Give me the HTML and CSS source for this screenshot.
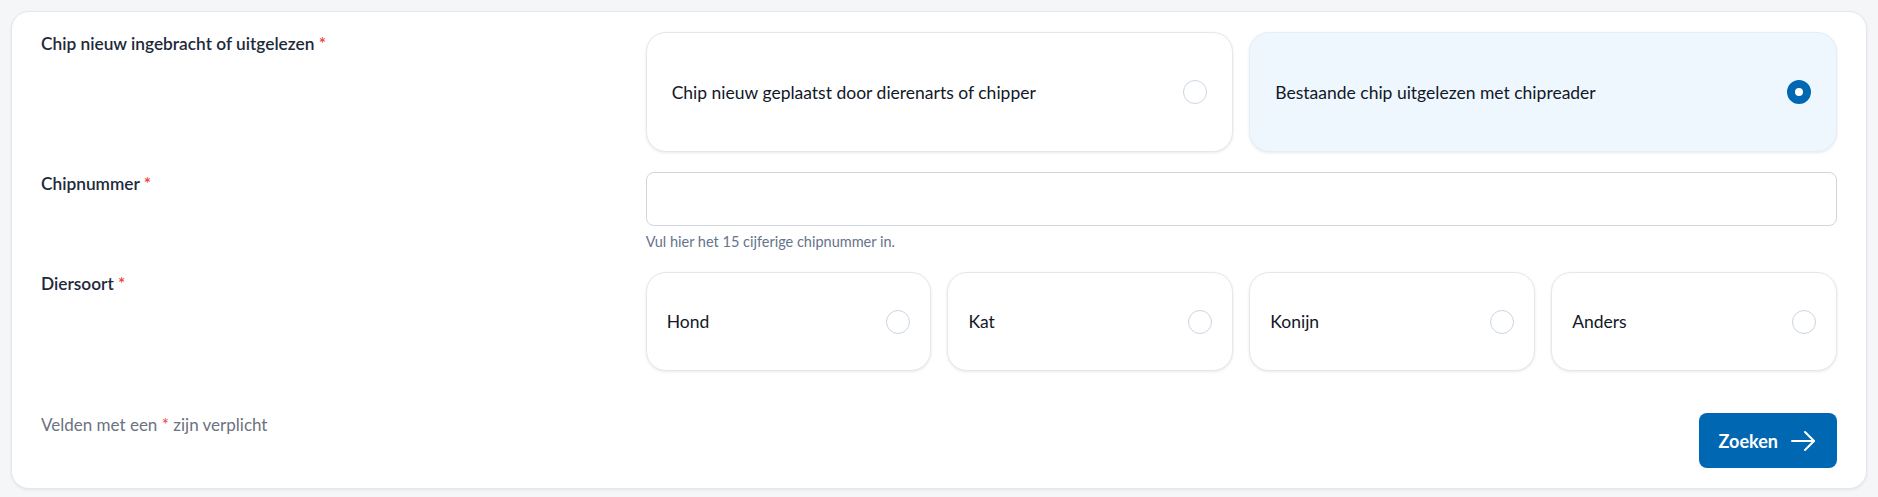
FILE: index.html
```html
<!DOCTYPE html>
<html lang="nl">
<head>
    <meta charset="UTF-8">
    <meta name="viewport" content="width=device-width, initial-scale=1.0">
    <title>Chip zoeken</title>
    <link rel="stylesheet" href="styles.css">
</head>
<body>
    <form class="panel" onsubmit="return false">
        <div class="field">
            <div class="field-label">Chip nieuw ingebracht of uitgelezen <span class="req">*</span></div>
            <div class="options options-2">
                <label class="option big">
                    <span>Chip nieuw geplaatst door dierenarts of chipper</span>
                    <input type="radio" name="chip" value="nieuw">
                </label>
                <label class="option big checked">
                    <span>Bestaande chip uitgelezen met chipreader</span>
                    <input type="radio" name="chip" value="bestaand" checked>
                </label>
            </div>
        </div>

        <div class="field">
            <div class="field-label">Chipnummer <span class="req">*</span></div>
            <div>
                <input class="text-input" type="text" name="chipnummer">
                <div class="help">Vul hier het 15 cijferige chipnummer in.</div>
            </div>
        </div>

        <div class="field">
            <div class="field-label">Diersoort <span class="req">*</span></div>
            <div class="options options-4">
                <label class="option">
                    <span>Hond</span>
                    <input type="radio" name="dier" value="hond">
                </label>
                <label class="option">
                    <span>Kat</span>
                    <input type="radio" name="dier" value="kat">
                </label>
                <label class="option">
                    <span>Konijn</span>
                    <input type="radio" name="dier" value="konijn">
                </label>
                <label class="option">
                    <span>Anders</span>
                    <input type="radio" name="dier" value="anders">
                </label>
            </div>
        </div>

        <div class="footer">
            <div class="note">Velden met een <span class="req">*</span> zijn verplicht</div>
            <button class="btn" type="submit">
                Zoeken
                <svg width="26" height="22" viewBox="0 0 26 22" fill="none" stroke="currentColor" stroke-width="2" stroke-linecap="round" stroke-linejoin="round">
                    <path d="M2 11h22"/>
                    <path d="M15 2l9 9-9 9"/>
                </svg>
            </button>
        </div>
    </form>

    <script>
        document.querySelectorAll('.option input').forEach(function (input) {
            input.addEventListener('change', function () {
                document.querySelectorAll('input[name="' + input.name + '"]').forEach(function (other) {
                    other.closest('.option').classList.toggle('checked', other.checked);
                });
            });
        });
    </script>
</body>
</html>
```

FILE: styles.css
```css
body {
    margin: 0;
    padding: 11px 11px 10px;
    background-color: #f5f6f8;
    font-family: 'Lato', 'Noto Sans', sans-serif;
    color: #111827;
}
.panel {
    background-color: #fff;
    border: 1px solid #e5e7eb;
    border-radius: 18px;
    box-shadow: 0 1px 3px rgba(0, 0, 0, 0.08);
    padding: 20px 29px;
}
.field {
    display: grid;
    grid-template-columns: 1fr 2fr;
    column-gap: 9px;
    margin-bottom: 20px;
}
.field-label {
    font-size: 17.3px;
    font-weight: 600;
    line-height: 24px;
    color: #1e293b;
}
.req {
    color: #ef4444;
}
.options {
    display: grid;
    gap: 16px;
}
.options-2 {
    grid-template-columns: 1fr 1fr;
}
.options-4 {
    grid-template-columns: repeat(4, 1fr);
}
.option {
    display: flex;
    align-items: center;
    justify-content: space-between;
    height: 99px;
    box-sizing: border-box;
    padding: 0 20px;
    border: 1px solid #e5e7eb;
    border-radius: 20px;
    background-color: #fff;
    box-shadow: 0 1px 3px rgba(0, 0, 0, 0.09);
    font-size: 17.5px;
    color: #111827;
    cursor: pointer;
}
.option.big {
    height: 120px;
    padding: 0 25px;
}
.option.checked {
    background-color: #eef6fe;
    border-color: #e6eef7;
}
.option input {
    appearance: none;
    -webkit-appearance: none;
    margin: 0;
    width: 24px;
    height: 24px;
    flex-shrink: 0;
    border: 1px solid #cbd5e1;
    border-radius: 50%;
    background-color: #fff;
    cursor: pointer;
}
.option input:checked {
    border: 8px solid #0068b3;
}
.text-input {
    display: block;
    width: 100%;
    height: 54px;
    box-sizing: border-box;
    border: 1px solid #d1d5db;
    border-radius: 8px;
    padding: 0 14px;
    font-family: inherit;
    font-size: 16px;
}
.help {
    margin-top: 6px;
    font-size: 14.5px;
    line-height: 20px;
    color: #64748b;
}
.footer {
    display: flex;
    justify-content: space-between;
    align-items: flex-start;
    margin-top: 42px;
}
.note {
    font-size: 17px;
    line-height: 24px;
    color: #6b7280;
}
.btn {
    display: flex;
    align-items: center;
    gap: 12px;
    height: 55px;
    padding: 0 21px 0 20px;
    border: none;
    border-radius: 8px;
    background-color: #0068b3;
    color: #fff;
    font-family: inherit;
    font-size: 18px;
    font-weight: 700;
    cursor: pointer;
}
```
